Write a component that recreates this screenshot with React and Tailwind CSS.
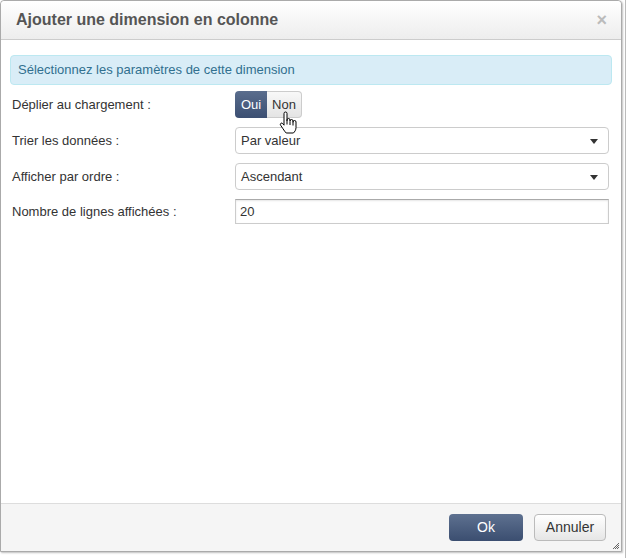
import React from "react";

function HandCursor() {
  return (
    <svg
      width="18"
      height="24"
      viewBox="0 0 18 24"
      className="pointer-events-none absolute left-[278px] top-[110px]"
    >
      <path
        d="M5 2.5a1.5 1.5 0 0 1 3 0V10V9a1.5 1.5 0 0 1 3 0v1.5V10a1.5 1.5 0 0 1 3 0v1.5V11a1.5 1.5 0 0 1 3 0v5.5c0 2.5-1.3 4.3-2.6 5.5H7.2c-1-1-2.2-2.6-3.2-4.2L1.6 14.2a1.3 1.3 0 0 1 2.1-1.6L5 14.2Z"
        fill="#fff"
        stroke="#000"
        strokeWidth="1"
        strokeLinejoin="round"
      />
      <path d="M8 10v3.5M11 11v3M14 11.5v3" stroke="#000" strokeWidth="1" />
    </svg>
  );
}

function Caret() {
  return (
    <svg width="8" height="5" viewBox="0 0 8 5" className="absolute right-[10px] top-[11px]">
      <path d="M0 0h8L4 5z" fill="#333" />
    </svg>
  );
}

function Row({ label, children }) {
  return (
    <div className="flex items-center">
      <div className="w-[223px] text-[13px] text-[#333]">{label}</div>
      <div className="flex-1">{children}</div>
    </div>
  );
}

function SelectBox({ value }) {
  return (
    <div className="relative flex h-[27px] items-center rounded-[4px] border border-[#ccc] bg-white pl-[5px] text-[13px] text-[#333]">
      {value}
      <Caret />
    </div>
  );
}

export default function App() {
  return (
    <div
      className="flex h-[558px] w-[628px] bg-white"
      style={{ fontFamily: '"Liberation Sans", Arial, sans-serif' }}
    >
      <div className="relative flex h-[552px] w-[622px] flex-col rounded-t-[4px] border border-[#aaa] bg-white shadow-[1px_1px_2px_rgba(0,0,0,0.25)]">
        <div className="flex h-[39px] items-center justify-between rounded-t-[4px] border-b border-[#ccc] bg-gradient-to-b from-white to-[#ededed] pl-[15px] pr-[14px]">
          <h1 className="text-[16px] font-bold text-[#555]">Ajouter une dimension en colonne</h1>
          <span className="text-[18px] font-bold leading-none text-[#bbb]">×</span>
        </div>

        <div className="flex flex-1 flex-col px-[9px] pt-[15px]">
          <div className="flex h-[30px] items-center rounded-[4px] border border-[#bce8f1] bg-[#d9edf7] pl-[7px] text-[13px] text-[#31708f]">
            Sélectionnez les paramètres de cette dimension
          </div>

          <div className="mt-[6px] flex flex-col gap-[9px] pl-[2px] pr-[3px]">
            <Row label="Déplier au chargement :">
              <div className="flex h-[27px] w-fit text-[13px]">
                <div className="flex w-[32px] items-center justify-center rounded-l-[4px] bg-gradient-to-b from-[#5a6d8d] to-[#3c4f72] text-white">
                  Oui
                </div>
                <div className="flex w-[35px] items-center justify-center rounded-r-[4px] border border-l-0 border-[#ccc] bg-gradient-to-b from-[#f8f8f8] to-[#e4e4e4] text-[#333]">
                  Non
                </div>
              </div>
            </Row>
            <Row label="Trier les données :">
              <SelectBox value="Par valeur" />
            </Row>
            <Row label="Afficher par ordre :">
              <SelectBox value="Ascendant" />
            </Row>
            <Row label="Nombre de lignes affichées :">
              <div className="flex h-[25px] items-center border border-[#ccc] border-t-[#aaa] bg-white pl-[4px] text-[13px] text-[#333] shadow-[inset_0_1px_2px_rgba(0,0,0,0.1)]">
                20
              </div>
            </Row>
          </div>
        </div>

        <div className="flex h-[48px] items-center justify-end gap-[11px] border-t border-[#ddd] bg-[#f5f5f5] pr-[15px]">
          <button className="h-[27px] w-[74px] rounded-[4px] bg-gradient-to-b from-[#5e7190] to-[#3b4e70] text-[14px] text-white">
            Ok
          </button>
          <button className="h-[27px] w-[72px] rounded-[4px] border border-[#bbb] bg-gradient-to-b from-white to-[#e6e6e6] text-[14px] text-[#333]">
            Annuler
          </button>
        </div>

        <svg width="8" height="8" viewBox="0 0 8 8" className="absolute bottom-[1px] right-[1px]">
          <path d="M7 1L1 7M7 3L3 7M7 5L5 7" stroke="#666" strokeWidth="1" />
        </svg>

        <HandCursor />
      </div>
      <div className="ml-[3px] h-full w-px bg-[#bbb]" />
    </div>
  );
}
